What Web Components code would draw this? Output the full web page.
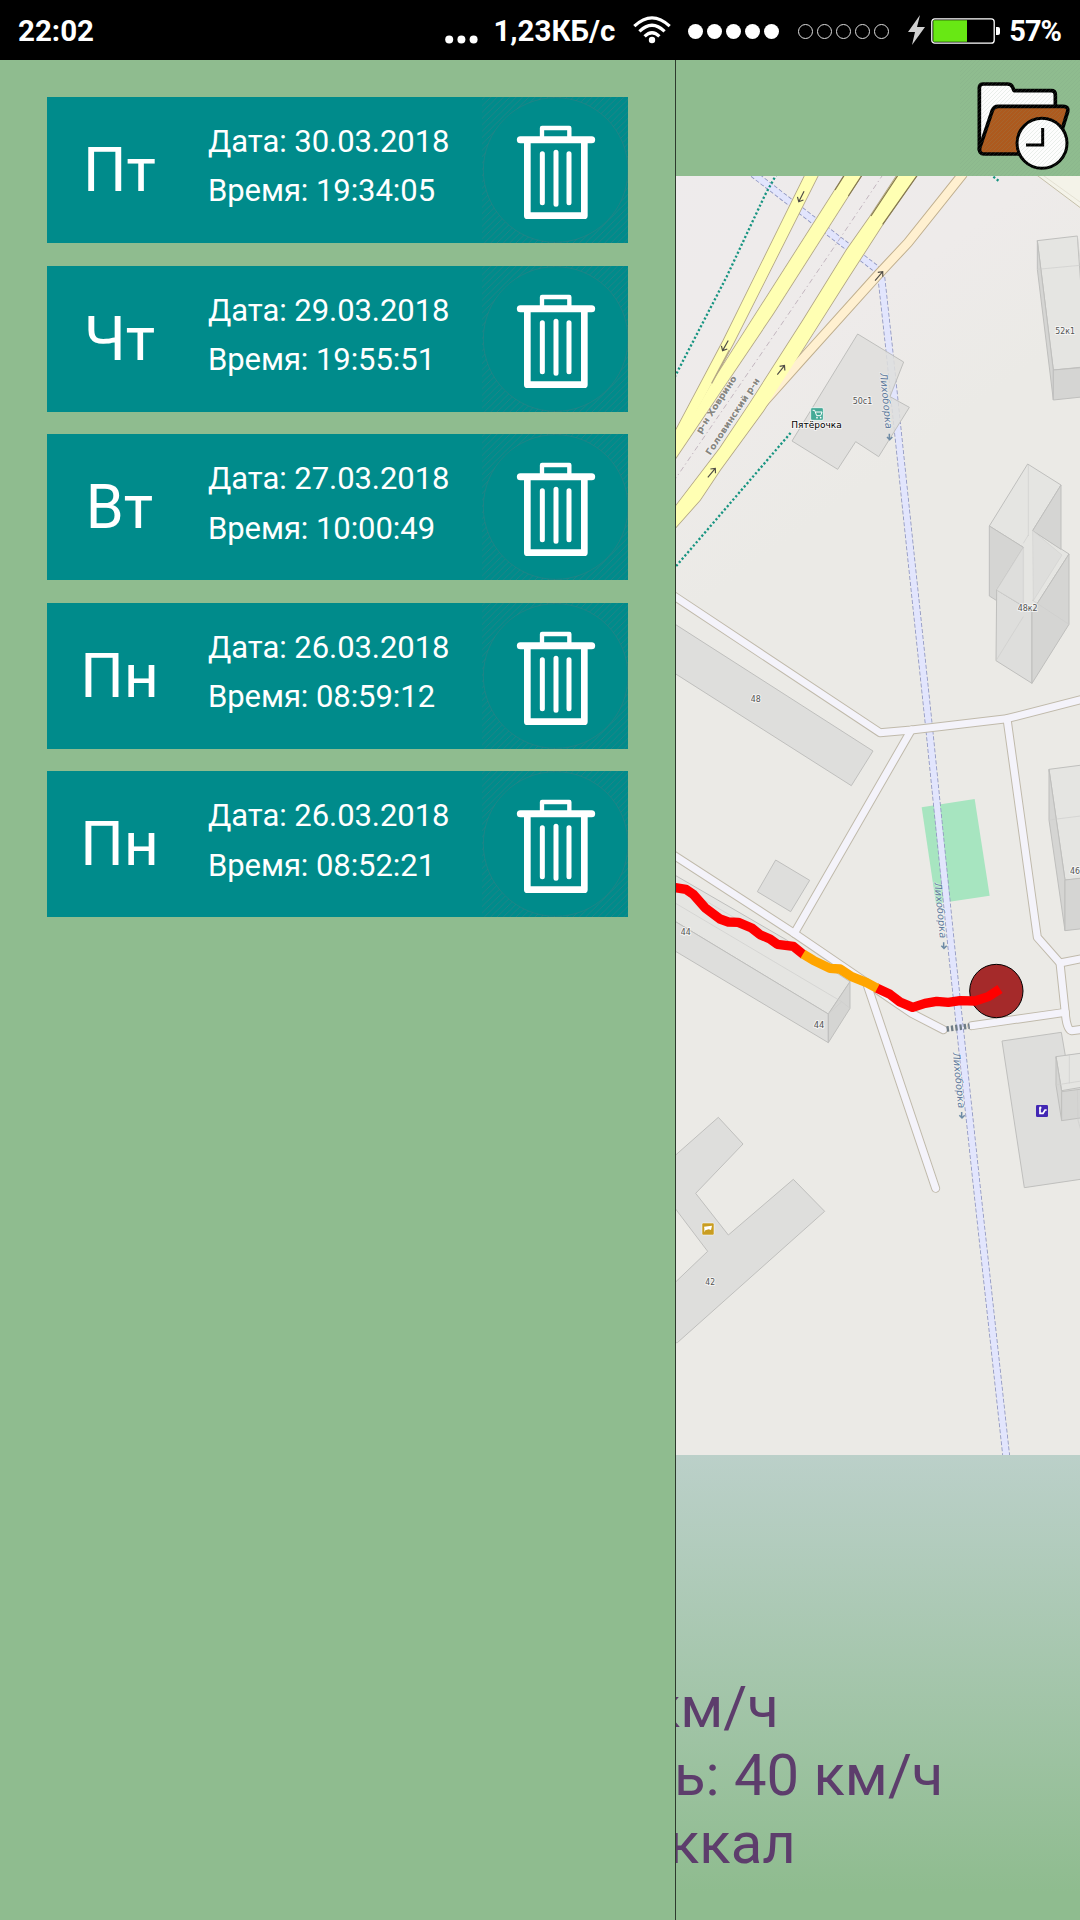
<!DOCTYPE html>
<html lang="ru">
<head>
<meta charset="utf-8">
<title>Трекер</title>
<style>
html,body{margin:0;padding:0;background:#000}
body{width:1080px;height:1920px;overflow:hidden;font-family:Roboto,"Noto Sans",sans-serif}
</style>
</head>
<body>
<tracker-app></tracker-app>
<script>
const define = (name, html, setup) => customElements.define(name, class extends HTMLElement {
  connectedCallback() {
    if (this.shadowRoot) return;
    this.attachShadow({mode: 'open'}).innerHTML = typeof html === 'function' ? html(this) : html;
    if (setup) setup(this);
  }
});

define('signal-dots', el => `
<style>
:host{display:flex;gap:4px}
i{width:15px;height:15px;border-radius:50%;box-sizing:border-box;background:${el.hasAttribute('empty') ? 'none;border:1px solid #ddd' : '#fff'}}
</style><i></i><i></i><i></i><i></i><i></i>`);

define('status-bar', `
<style>
:host{display:flex;align-items:center;height:60px;background:#000;color:#fff;font-weight:700;font-size:29.5px;box-sizing:border-box;padding:2px 19px 0 18px}
span{white-space:nowrap;line-height:34px}
.time{flex:1}
.more{margin:17px 15px 0 0}
.wifi{margin:-2px 17px 0 18px}
.bolt{margin:-2px 6px 0 19px}
.batt{margin-right:9px}
.pct{font-size:29px;letter-spacing:-1px}
signal-dots + signal-dots{margin-left:19px}
svg{display:block}
</style>
<span class="time">22:02</span>
<svg class="more" width="33" height="9"><g fill="#fff"><circle cx="4.2" cy="4.5" r="4"/><circle cx="16.4" cy="4.5" r="4"/><circle cx="28.6" cy="4.5" r="4"/></g></svg>
<span class="rate">1,23КБ/с</span>
<svg class="wifi" width="38" height="28" viewBox="0 0 38 28"><g fill="none" stroke="#fff" stroke-width="3.2"><path d="M1.3 10.2Q19-6.5 36.7 10.2"/><path d="M6.4 15.4Q19 3.2 31.6 15.4"/><path d="M11.6 20.4Q19 13 26.4 20.4"/></g><circle cx="19" cy="24" r="3.2" fill="#fff"/></svg>
<signal-dots></signal-dots><signal-dots empty></signal-dots>
<svg class="bolt" width="17" height="30" viewBox="0 0 17 30"><path d="M12 0 0 17h7L4 30 17 12H9Z" fill="#d0d0d0"/></svg>
<svg class="batt" width="69" height="26" viewBox="0 0 69 26"><rect x=".8" y=".8" width="62.4" height="24.4" rx="3" fill="#000" stroke="#fff" stroke-width="1.3"/><path d="M2.3 2.3H36V23.7H2.3Z" fill="#68e814"/><path d="M65 9h2q2 0 2 2v4q0 2-2 2h-2Z" fill="#fff"/></svg>
<span class="pct">57%</span>`);

define('trash-icon', `
<style>:host{display:block;width:146px;height:146px}svg{display:block}</style>
<svg width="146" height="146" viewBox="66 21 438 438">
<defs><pattern id="h" width="19" height="19" patternUnits="userSpaceOnUse"><path d="M-2 21 21-2" stroke="#5d7580" stroke-width="2.4" opacity=".45"/></pattern></defs>
<path fill="url(#h)" fill-rule="evenodd" d="M66 21H504V459H66ZM287 23a217 217 0 1 0 .1 0Z"/>
<circle cx="287" cy="240" r="217" fill="none" stroke="#52777d" stroke-width="1.5" opacity=".7"/>
<g fill="none" stroke="#fff" stroke-linecap="round" stroke-linejoin="round">
<path d="M246 145V114H328V145" stroke-width="13"/><path d="M181 149H395" stroke-width="21"/>
<path d="M202 152V377H373V152" stroke-width="20"/>
<path d="M247 191V338M288 187V343M327 191V338" stroke-width="15"/></g></svg>`);

define('track-card', el => `
<style>
:host{display:flex;width:581px;height:146px;background:#008b8b;color:#fff}
.day{width:148px;box-sizing:border-box;padding-right:3px;text-align:center;font-size:61px;line-height:146px;white-space:nowrap}
.info{flex:1;padding:20px 0 0 13px;font-size:31px;line-height:49.4px;letter-spacing:-.06px;white-space:nowrap}
.info div{height:49.4px}
</style>
<div class="day">${el.getAttribute('day')}</div>
<div class="info"><div>Дата: ${el.getAttribute('date')}</div><div>Время: ${el.getAttribute('time')}</div></div>
<trash-icon></trash-icon>`);

define('history-drawer', `
<style>:host{display:flex;flex-direction:column;gap:22.6px;box-sizing:border-box;width:676px;padding:37px 0 0 47px;background:#8fbc8f;border-right:1px solid #2d3b2d}</style><slot></slot>`);

define('top-bar', `
<style>:host{display:flex;justify-content:flex-end;height:116px;background:#8fbc8f}svg{display:block}</style>
<svg width="120" height="116" viewBox="0 0 360 348">
<defs><pattern id="h" width="12" height="12" patternUnits="userSpaceOnUse"><path d="M-2 14 14-2" stroke="#7c9a85" stroke-width="1.5" opacity=".3"/></pattern></defs>
<g stroke="#000" stroke-width="11" stroke-linejoin="round">
<path fill="#fdfdfd" d="M58 270V84Q58 72 70 72H142Q154 72 158 82L162 92H274Q286 92 286 104V145L120 150Z"/>
<path fill="#ad5a1e" d="M59 264 97 151Q102 139 114 139H310Q326 139 323 155L288 268Q284 282 270 282H72Q57 282 59 264Z"/>
<circle cx="246" cy="250" r="75" fill="#fdfdfd" stroke-width="9"/></g>
<path d="M248 204V255H198" fill="none" stroke="#000" stroke-width="9"/>
<rect width="360" height="348" fill="url(#h)"/></svg>`);

// Map geometry is in thirds of a pixel.
const streets = [
  'M0 1270 630 1688 724 1680 1010 1646 1245 1586',
  'M724 1680 373 2290',
  'M0 2048 370 2288 590 2438 725 2530 820 2579',
  'M590 2440 797 3055',
  'M1011 1646 1102 2302 1170 2379 1186 2530Q1190 2580 1205 2582L1245 2577',
  'M1170 2379 1245 2364',
  'M905 2567 1186 2527'];
const main = 'M685 10 600 140 530 240 400 450 240 700 150 835 10 1018V1080L90 990 150 900 280 722 365 590 530 330 640 160 745 10Z';
const west = ['M408 10 160 512 10 795V850L125 640 190 520 447 10Z', 'M527 10 125 640 10 840V874L310 430 578 10Z'];
const link = 'M880 10 714 218 628 310 396 568 280 698';
const river = 'M235 0 626 302M634 322 658 540 724 1170 777 1670 848 2370 921 3055 1010 3870';
const arrow = (x, y, a, s = 1) => `<path transform="translate(${x} ${y}) rotate(${a}) scale(${s})" d="M-18 0H17M6-10 17 0 6 10" fill="none" stroke="#4f4c46" stroke-width="3.5"/>`;
const flow = (x, y, ax, ay) => `<text class="water" transform="translate(${x} ${y}) rotate(84.3)" textLength="168" lengthAdjust="spacingAndGlyphs">Лихоборка</text><path transform="translate(${ax} ${ay})" d="M-1-10V7M-8 0 0 8 8 0" fill="none" stroke="#6d8aa5" stroke-width="4.5"/>`;
const num = (x, y, t, w) => `<text class="num" x="${x}" y="${y}" textLength="${w}" lengthAdjust="spacingAndGlyphs">${t}</text>`;
define('street-map', `
<style>
:host{display:block;width:404px;height:1279px;overflow:hidden}svg{display:block}
.b path{fill:#dededc;stroke:#bfbfbd;stroke-width:3;stroke-linejoin:round}
.b .r{fill:#e5e5e2}.b .w{fill:#d5d5d3}.b .n{fill:none;stroke:#cdcdcb;stroke-width:2}
text{paint-order:stroke;stroke:#fff;stroke-opacity:.65;stroke-width:6;stroke-linejoin:round}
.num{font:25px "DejaVu Sans";fill:#555}
.water{font:italic 30px "DejaVu Sans";fill:#5f7b9d;stroke-opacity:.5;stroke-width:4}
.area{font:bold 27px "DejaVu Sans";fill:#85857f;stroke-opacity:.3}
.shop{font:27px "DejaVu Sans";fill:#000}
</style>
<svg width="404" height="1279" viewBox="18 18 1212 3837">
<defs><linearGradient id="g" gradientUnits="userSpaceOnUse" x1="0" y1="0" x2="650" y2="900"><stop offset="0" stop-color="#eeebec"/><stop offset=".6" stop-color="#eeebea"/><stop offset="1" stop-color="#ebeae6"/></linearGradient></defs>
<rect width="1240" height="3870" fill="url(#g)"/>
<path d="M1102 18H1240V122Z" fill="#f4f3e9"/><path d="M1100 15 1240 120" stroke="#c4bda9" stroke-width="3"/><path d="M1118 15 1240 103" stroke="#ddd8c8" stroke-width="2"/>
<path d="M755 1912 914 1887 959 2177 798 2201Z" fill="#a7e5c0"/>
<g fill="none"><path d="${river}" stroke="#8e95c0" stroke-width="23" stroke-dasharray="12 6"/><path d="${river}" stroke="#e2e5fd" stroke-width="18"/></g>
<g class="b">
<path fill-opacity=".86" d="M563 492 701 576 660 680 718 712 626 860 557 815 503 898 366 813Z"/>
<path class="r" d="M1102 212 1222 198 1250 590 1150 600Z"/><path class="w" d="M1102 212V298L1150 690V600Z"/><path class="w" d="M1150 600 1245 592V680L1150 690Z"/><path class="n" d="M1102 298 1240 285M1222 198 1232 290"/>
<path d="M0 1353 609 1743 544 1847 0 1501Z"/>
<path d="M317 2070 419 2131 362 2225 262 2165Z"/>
<path class="r" d="M1137 1798 1245 1784V2125L1185 2130Z"/><path class="w" d="M1137 1798V1950L1185 2282V2130Z"/><path class="w" d="M1185 2130 1245 2123V2275L1185 2282Z"/><path class="n" d="M1137 1950 1240 1937"/>
<path class="r" d="M0 2107 350 2310 540 2435 475 2532 0 2245Z"/><path d="M0 2245 475 2532V2618L0 2334Z"/><path class="w" d="M475 2532 540 2435V2515L475 2618Z"/><path class="n" d="M0 2190 515 2495 475 2532M0 2130 350 2335M515 2495 540 2515"/>
<path d="M996 2613 1174 2587 1186 2657 1245 2650V3026L1063 3053Z"/>
<path class="r" d="M1158 2660 1245 2648V2750L1175 2762Z"/><path class="w" d="M1158 2660V2745L1175 2852V2765Z"/><path class="w" d="M1175 2765 1245 2756V2842L1175 2852Z"/><path class="n" d="M1158 2745 1240 2732M1198 2655V2740M1222 2760 1224 2850 1240 2910"/>
<path d="M0 2970 145 2842 219 2922 77 3070 175 3195 370 3028 464 3124 22 3518 0 3518V3352L113 3244 0 3095Z"/>
<g transform="translate(900 810)">
<path class="r" d="M58 258 173 72 273 135 188 272 297 342 186 515 80 450 160 322Z"/>
<path class="w" d="M58 258 160 322 80 450 160 498V532L58 468Z"/>
<path class="w" d="M273 135V328L188 272Z"/>
<path d="M80 450 186 515V730L78 662Z"/><path class="w" d="M186 515 297 342V553L186 730Z"/>
<path class="n" style="fill:#dededc" d="M160 322 80 450 160 498Z"/>
<path class="r" style="stroke:none" d="M163 320 178 290 186 288V500L163 490Z"/>
<path d="M188 272 276 345 190 482Z" style="stroke:#d2d2d0;stroke-width:2"/>
<path class="n" d="M175 75V288M78 662 160 530M186 480 297 553M175 285 160 310"/></g>
</g>
<g fill="none" stroke-linecap="round" stroke-linejoin="round">
<g stroke="#c0baab" stroke-width="27">${streets.map(d => `<path d="${d}"/>`).join('')}</g>
<g stroke="#f4f3fa" stroke-width="21">${streets.map(d => `<path d="${d}"/>`).join('')}</g></g>
<path d="M830 2577 899 2568" stroke="#6f7c86" stroke-width="17" stroke-dasharray="7 6"/>
<path d="${link}" fill="none" stroke="#bfae8e" stroke-width="31"/>
<g stroke="#b3a785" stroke-width="5"><path d="${main}"/>${west.map(d => `<path d="${d}"/>`).join('')}</g>
<path d="${link}" fill="none" stroke="#fff0d0" stroke-width="25"/>
<g fill="#ffffb3"><path d="${main}"/>${west.map(d => `<path d="${d}"/>`).join('')}</g>
<path d="M603 138 685 14M638 163 743 14M495 60 524 14M535 78 577 14" stroke="#84784f" stroke-width="3.5"/>
<path d="M125 640 178 540" stroke="#b3a785" stroke-width="4"/>
<path d="M640 12 500 220 350 440 0 950" fill="none" stroke="#b9abb6" stroke-width="2.5" stroke-dasharray="16 9 4 9"/>
<path d="M320 12 285 75 170 320 0 648M10 1198 365 785M960 12 990 36" fill="none" stroke="#179481" stroke-width="7" stroke-dasharray="6.5 6.5"/>
${arrow(394, 80, 117)}${arrow(166, 527, 119)}${arrow(333, 600, -52)}${arrow(125, 908, -50)}${arrow(627, 318, -49)}
<text class="area" transform="translate(92 793) rotate(-57)" textLength="200" lengthAdjust="spacingAndGlyphs">р-н Ховрино</text>
<text class="area" transform="translate(121 857) rotate(-56.5)" textLength="270" lengthAdjust="spacingAndGlyphs">Головинский р-н</text>
${flow(630, 610, 659, 801)}${flow(793, 2138, 822, 2327)}${flow(848, 2648, 876, 2836)}
<rect x="422" y="713" width="38" height="38" rx="4" fill="#45aa97" stroke="#fff" stroke-opacity=".7" stroke-width="3"/><path d="M428 721H434L440 737H452L456 726H437" fill="none" stroke="#fff" stroke-width="3"/><circle cx="441" cy="743" r="2.5" fill="#fff"/><circle cx="452" cy="743" r="2.5" fill="#fff"/>
<text class="shop" x="364" y="773" textLength="151" lengthAdjust="spacingAndGlyphs">Пятёрочка</text>
${num(548, 702, '50с1', 59)}${num(1156, 493, '52к1', 59)}${num(1043, 1324, '48к2', 60)}${num(242, 1597, '48', 30)}${num(1200, 2113, '46', 30)}${num(32, 2296, '44', 30)}${num(431, 2573, '44', 32)}${num(106, 3344, '42', 29)}
<rect x="1098" y="2805" width="36" height="36" rx="4" fill="#4227b4"/><path d="M1110 2814V2830H1119L1125 2820H1130" fill="none" stroke="#fff" stroke-width="5"/><circle cx="1111" cy="2813" r="3.5" fill="#fff"/>
<rect x="96" y="3159" width="36" height="36" rx="4" fill="#c99d20" stroke="#fff" stroke-opacity=".5" stroke-width="3"/><path d="M102 3170 126 3167 123 3180 116 3178 106 3181 103 3187V3175Z" fill="#fff"/>
<circle cx="979" cy="2463" r="80" fill="#a52a2a" stroke="#000" stroke-width="3"/>
<g fill="none" stroke-width="28" stroke-linejoin="round">
<path stroke="#f00" d="M10 2152 48 2158 70 2173 105 2213 150 2247 175 2256 205 2257 245 2274 270 2294 300 2307 322 2323 370 2329 402 2355"/>
<path stroke="#f00" d="M618 2453 660 2473 690 2496 728 2512 765 2500 800 2494 835 2497 870 2492 915 2493 955 2480 990 2457"/>
<path stroke="orange" d="M399 2352 430 2371 480 2395 510 2397 545 2420 590 2438 622 2455"/></g>
</svg>`);

define('track-stats', `
<style>
:host{display:block;flex:1;overflow:hidden;box-sizing:border-box;padding-top:218px;background:linear-gradient(#bbd0c9,#8fbc8f 94%);color:#5d3d6c;font-size:58px;line-height:68px}
div{white-space:nowrap;height:68px}
.a{margin-left:-27px}.b{margin-left:-2px}.c{margin-left:-8px}
</style>
<div class="a">км/ч</div><div class="b">ь: 40 км/ч</div><div class="c">ккал</div>`);

define('tracker-app', `
<style>
:host{display:flex;flex-direction:column;width:1080px;height:1920px}
.row{display:flex;flex:1;min-height:0}
main{display:flex;flex-direction:column;width:404px;overflow:hidden}
</style>
<status-bar></status-bar>
<div class="row">
<history-drawer>
<track-card day="Пт" date="30.03.2018" time="19:34:05"></track-card>
<track-card day="Чт" date="29.03.2018" time="19:55:51"></track-card>
<track-card day="Вт" date="27.03.2018" time="10:00:49"></track-card>
<track-card day="Пн" date="26.03.2018" time="08:59:12"></track-card>
<track-card day="Пн" date="26.03.2018" time="08:52:21"></track-card>
</history-drawer>
<main><top-bar></top-bar><street-map></street-map><track-stats></track-stats></main>
</div>`);
</script>
</body>
</html>
